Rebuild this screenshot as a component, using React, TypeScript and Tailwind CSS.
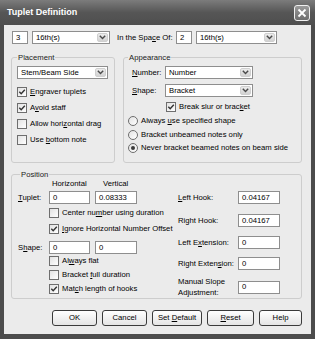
import React from "react";

function Chevron() {
  return (
    <svg width="7" height="5" viewBox="0 0 7 5">
      <path d="M0.8 0.8 L3.5 3.6 L6.2 0.8" fill="none" stroke="#4a4a4a" strokeWidth="1.4" />
    </svg>
  );
}

function Input({ value, className }: { value: string; className: string }) {
  return (
    <div className={`h-[13px] bg-white border border-[#8e8e8e] flex items-center pl-[3px] ${className}`}>
      {value}
    </div>
  );
}

function Select({ value, className }: { value: string; className: string }) {
  return (
    <div className={`h-[13px] bg-white border border-[#8e8e8e] flex items-stretch ${className}`}>
      <span className="flex-1 flex items-center pl-[3px]">{value}</span>
      <div className="w-[11px] m-[1px] rounded-[2px] border border-[#cfcfcf] bg-gradient-to-b from-[#ececec] to-[#d2d2d2] flex items-center justify-center">
        <Chevron />
      </div>
    </div>
  );
}

function Check({ checked, children }: { checked?: boolean; children: React.ReactNode }) {
  return (
    <div className="flex items-center gap-[3px]">
      <div className="w-[10px] h-[10px] border border-[#6e6e6e] bg-gradient-to-br from-[#e2e2e2] to-white flex items-center justify-center">
        {checked && (
          <svg width="8" height="8" viewBox="0 0 8 8">
            <path d="M1.3 3.8 L3.2 5.8 L6.8 1.8" fill="none" stroke="#333" strokeWidth="1.4" />
          </svg>
        )}
      </div>
      <span>{children}</span>
    </div>
  );
}

function Radio({ checked, children }: { checked?: boolean; children: React.ReactNode }) {
  return (
    <div className="flex items-center gap-[3px]">
      <div className="w-[10px] h-[10px] rounded-full border border-[#6e6e6e] bg-gradient-to-br from-[#e2e2e2] to-white flex items-center justify-center">
        {checked && <div className="w-[4px] h-[4px] rounded-full bg-[#3c3c3c]" />}
      </div>
      <span>{children}</span>
    </div>
  );
}

function Button({ children, className }: { children: React.ReactNode; className: string }) {
  return (
    <div
      className={`h-[16px] rounded-[3px] border border-[#3a3a3a] bg-gradient-to-b from-white to-[#e4e4e4] flex items-center justify-center whitespace-pre ${className}`}
    >
      {children}
    </div>
  );
}

function Group({
  label,
  className,
  labelClass,
  children,
}: {
  label: string;
  className: string;
  labelClass: string;
  children: React.ReactNode;
}) {
  return (
    <div className={`relative border border-[#cdcdcd] rounded-[3px] ${className}`}>
      <span className={`absolute top-[-5px] px-[1px] bg-[#ebebeb] leading-[9px] text-[#222] ${labelClass}`}>{label}</span>
      {children}
    </div>
  );
}

export default function App() {
  return (
    <div className="w-[315px] h-[339px] bg-[#4c4c4c] flex flex-col text-[7.7px] leading-none text-black font-['Liberation_Sans',Arial,sans-serif]">
      {/* Title bar */}
      <div className="h-[25px] flex items-center pl-[7px] pr-[5px] bg-gradient-to-b from-[#7c7c7c] via-[#565656] to-[#4e4e4e]">
        <span className="text-white font-bold text-[9px]">Tuplet Definition</span>
        <div className="ml-auto w-[16px] h-[16px] rounded-[3px] border border-[#f0f0f0] bg-gradient-to-b from-[#9a9a9a] to-[#6e6e6e] flex items-center justify-center">
          <svg width="10" height="10" viewBox="0 0 10 10">
            <path d="M1.5 1.5 L8.5 8.5 M8.5 1.5 L1.5 8.5" stroke="white" strokeWidth="1.8" />
          </svg>
        </div>
      </div>

      {/* Client */}
      <div className="flex-1 mx-[4px] mb-[5px] bg-[#ebebeb] flex flex-col pl-[7px]">
        {/* Row 1 */}
        <div className="mt-[6px] ml-[1px] flex items-center h-[13px]">
          <Input value="3" className="w-[16px]" />
          <Select value="16th(s)" className="ml-[4px] w-[78px]" />
          <span className="ml-[7px] w-[59px]">
            In the Spa<u>c</u>e Of:
          </span>
          <Input value="2" className="w-[16px]" />
          <Select value="16th(s)" className="ml-[4px] w-[81px]" />
        </div>

        {/* Placement / Appearance */}
        <div className="mt-[13px] flex gap-[8px]">
          <Group label="Placement" labelClass="left-[5px]" className="w-[104px] h-[106px]">
            <div className="pt-[8px] pl-[5px] flex flex-col">
              <Select value="Stem/Beam Side" className="w-[91px]" />
              <div className="mt-[5px] flex flex-col">
                <div className="h-[16px] flex items-center">
                  <Check checked>
                    <u>E</u>ngraver tuplets
                  </Check>
                </div>
                <div className="h-[16px] flex items-center">
                  <Check checked>
                    A<u>v</u>oid staff
                  </Check>
                </div>
                <div className="h-[16px] flex items-center">
                  <Check>
                    Allow hori<u>z</u>ontal drag
                  </Check>
                </div>
                <div className="h-[16px] flex items-center">
                  <Check>
                    Use <u>b</u>ottom note
                  </Check>
                </div>
              </div>
            </div>
          </Group>

          <Group label="Appearance" labelClass="left-[4px]" className="w-[179px] h-[106px]">
            <div className="pt-[8px] flex flex-col">
              <div className="h-[13px] flex items-center">
                <span className="w-[41px] pl-[8px]">
                  <u>N</u>umber:
                </span>
                <Select value="Number" className="w-[88px]" />
              </div>
              <div className="mt-[5px] h-[13px] flex items-center">
                <span className="w-[41px] pl-[8px]">
                  <u>S</u>hape:
                </span>
                <Select value="Bracket" className="w-[88px]" />
              </div>
              <div className="mt-[3px] h-[14px] flex items-center pl-[42px]">
                <Check checked>
                  Break slur or brac<u>k</u>et
                </Check>
              </div>
              <div className="h-[14px] flex items-center pl-[4px]">
                <Radio>
                  Always <u>u</u>se specified shape
                </Radio>
              </div>
              <div className="h-[13px] flex items-center pl-[4px]">
                <Radio>Bracket unbeamed notes only</Radio>
              </div>
              <div className="h-[14px] flex items-center pl-[4px]">
                <Radio checked>Never bracket beamed notes on beam side</Radio>
              </div>
            </div>
          </Group>
        </div>

        {/* Position */}
        <Group label="Position" labelClass="left-[8px]" className="mt-[11px] w-[291px] h-[125px]">
          <div className="flex">
            <div className="w-[166px] pl-[6px] flex flex-col">
              <div className="mt-[4px] h-[10px] flex items-center">
                <span className="ml-[34px] w-[51px]">Horizontal</span>
                <span>Vertical</span>
              </div>
              <div className="mt-[2px] h-[13px] flex items-center">
                <span className="w-[31px]">
                  <u>T</u>uplet:
                </span>
                <Input value="0" className="w-[41px]" />
                <Input value="0.08333" className="ml-[5px] w-[42px]" />
              </div>
              <div className="mt-[1px] h-[16px] flex items-center pl-[31px]">
                <Check>
                  Center nu<u>m</u>ber using duration
                </Check>
              </div>
              <div className="h-[16px] flex items-center pl-[31px]">
                <Check checked>
                  <u>I</u>gnore Horizontal Number Offset
                </Check>
              </div>
              <div className="mt-[4px] h-[13px] flex items-center">
                <span className="w-[31px]">
                  S<u>h</u>ape:
                </span>
                <Input value="0" className="w-[41px]" />
                <Input value="0" className="ml-[5px] w-[42px]" />
              </div>
              <div className="h-[14px] flex items-center pl-[31px]">
                <Check>
                  Al<u>w</u>ays flat
                </Check>
              </div>
              <div className="h-[14px] flex items-center pl-[31px]">
                <Check>
                  Bracket <u>f</u>ull duration
                </Check>
              </div>
              <div className="h-[14px] flex items-center pl-[31px]">
                <Check checked>
                  Mat<u>c</u>h length of hooks
                </Check>
              </div>
            </div>

            <div className="flex flex-col">
              <div className="mt-[16px] h-[13px] flex items-center">
                <span className="w-[60px]">
                  <u>L</u>eft Hook:
                </span>
                <Input value="0.04167" className="w-[42px]" />
              </div>
              <div className="mt-[10px] h-[13px] flex items-center">
                <span className="w-[60px]">
                  Ri<u>g</u>ht Hook:
                </span>
                <Input value="0.04167" className="w-[42px]" />
              </div>
              <div className="mt-[9px] h-[13px] flex items-center">
                <span className="w-[60px]">
                  Left E<u>x</u>tension:
                </span>
                <Input value="0" className="w-[42px]" />
              </div>
              <div className="mt-[8px] h-[13px] flex items-center">
                <span className="w-[60px]">
                  Right Exten<u>s</u>ion:
                </span>
                <Input value="0" className="w-[42px]" />
              </div>
              <div className="mt-[6px] h-[22px] flex items-center">
                <span className="w-[60px] leading-[11px]">
                  Manual Slope
                  <br />
                  Adjustment:
                </span>
                <Input value="0" className="w-[42px]" />
              </div>
            </div>
          </div>
        </Group>

        {/* Buttons */}
        <div className="mt-[11px] ml-[41px] flex items-center">
          <Button className="w-[45px]">OK</Button>
          <Button className="ml-[5px] w-[45px]">Cancel</Button>
          <Button className="ml-[5px] w-[50px]">
            {"Set "}
            <u>D</u>efault
          </Button>
          <Button className="ml-[5px] w-[47px]">
            <u>R</u>eset
          </Button>
          <Button className="ml-[5px] w-[43px]">Help</Button>
        </div>
      </div>
    </div>
  );
}
